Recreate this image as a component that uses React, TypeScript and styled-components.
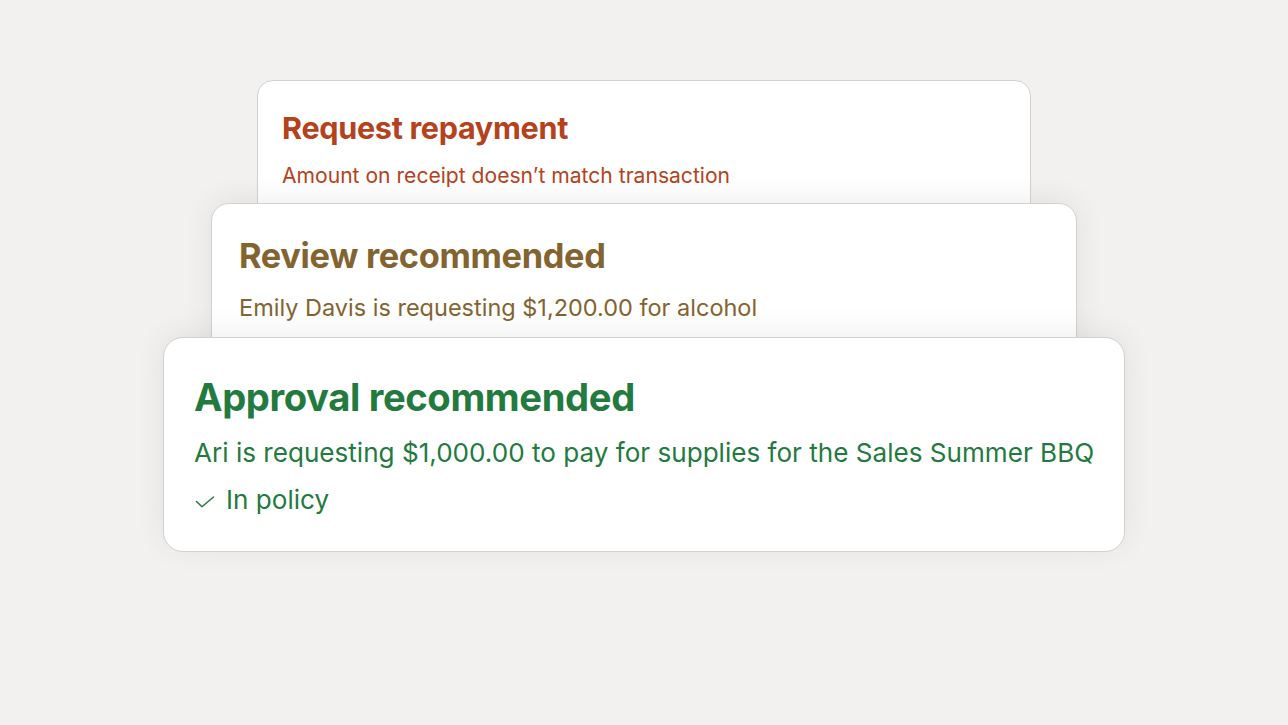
import React from "react";
import styled, { createGlobalStyle } from "styled-components";

const Global = createGlobalStyle`
  html, body { margin: 0; padding: 0; background: #f2f1ef; }
  body { font-family: Inter, "Liberation Sans", sans-serif; -webkit-font-smoothing: antialiased; }
`;

const Stage = styled.main`
  width: 1288px;
  height: 725px;
  background: #f2f1ef;
  display: flex;
  flex-direction: column;
  align-items: center;
  padding-top: 80px;
  box-sizing: border-box;
  overflow: hidden;
`;

type CardProps = {
  $w: number;
  $h?: number;
  $s: number;
  $top: number;
  $bottom: number;
  $overlap: number;
  $r: number;
  $shadow: boolean;
};

const Card = styled.section<CardProps>`
  position: relative;
  box-sizing: border-box;
  width: ${(p) => p.$w}px;
  height: ${(p) => (p.$h ? `${p.$h}px` : "auto")};
  margin-top: ${(p) => -p.$overlap}px;
  padding: ${(p) => p.$top}px ${(p) => 30 * p.$s}px ${(p) => p.$bottom}px;
  background: #fff;
  border: 1.5px solid #d2d1cf;
  border-radius: ${(p) => p.$r}px;
  box-shadow: ${(p) => (p.$shadow ? "0 -4px 30px rgba(0, 0, 0, 0.07)" : "none")};
  display: flex;
  flex-direction: column;
  overflow: hidden;
  white-space: nowrap;
`;

const Title = styled.h2<{ $s: number; $color: string }>`
  margin: 0;
  font-size: ${(p) => 38.2 * p.$s}px;
  line-height: ${(p) => 46 * p.$s}px;
  font-weight: 700;
  letter-spacing: -0.01em;
  color: ${(p) => p.$color};
`;

const Sub = styled.p<{ $size: number; $s: number; $color: string; $gap: number }>`
  margin: ${(p) => p.$gap}px 0 0;
  font-size: ${(p) => p.$size}px;
  line-height: ${(p) => 32 * p.$s}px;
  font-weight: 400;
  color: ${(p) => p.$color};
`;

const Policy = styled.div<{ $color: string }>`
  display: flex;
  align-items: center;
  gap: 11px;
  margin-top: 15.6px;
  font-size: 26.1px;
  line-height: 32px;
  color: ${(p) => p.$color};

  svg {
    flex: none;
    margin: 4px 0 0 1px;
  }
`;

const CheckIcon = () => (
  <svg width="20" height="12" viewBox="0 0 20 12" fill="none">
    <path d="M1.5 5.5 L7 10.75 L18.5 1" stroke="currentColor" strokeWidth="1.5" strokeLinecap="round" strokeLinejoin="round" />
  </svg>
);

const RED = "#b4431d";
const BROWN = "#836430";
const GREEN = "#237a3f";

export default function App() {
  return (
    <>
      <Global />
      <Stage>
        <Card $w={774} $h={150} $s={0.8} $top={29} $bottom={20} $overlap={0} $r={16} $shadow={false}>
          <Title $s={0.8} $color={RED}>Request repayment</Title>
          <Sub $size={21.1} $s={0.8} $color={RED} $gap={16.1}>Amount on receipt doesn’t match transaction</Sub>
        </Card>
        <Card $w={866} $h={160} $s={0.9} $top={31.5} $bottom={20} $overlap={27.5} $r={18} $shadow>
          <Title $s={0.9} $color={BROWN}>Review recommended</Title>
          <Sub $size={23.5} $s={0.9} $color={BROWN} $gap={17.2}>Emily Davis is requesting $1,200.00 for alcohol</Sub>
        </Card>
        <Card $w={962} $s={1} $top={35.5} $bottom={35.2} $overlap={25.5} $r={20} $shadow>
          <Title $s={1} $color={GREEN}>Approval recommended</Title>
          <Sub $size={26.1} $s={1} $color={GREEN} $gap={17}>Ari is requesting $1,000.00 to pay for supplies for the Sales Summer BBQ</Sub>
          <Policy $color={GREEN}>
            <CheckIcon />
            In policy
          </Policy>
        </Card>
      </Stage>
    </>
  );
}
